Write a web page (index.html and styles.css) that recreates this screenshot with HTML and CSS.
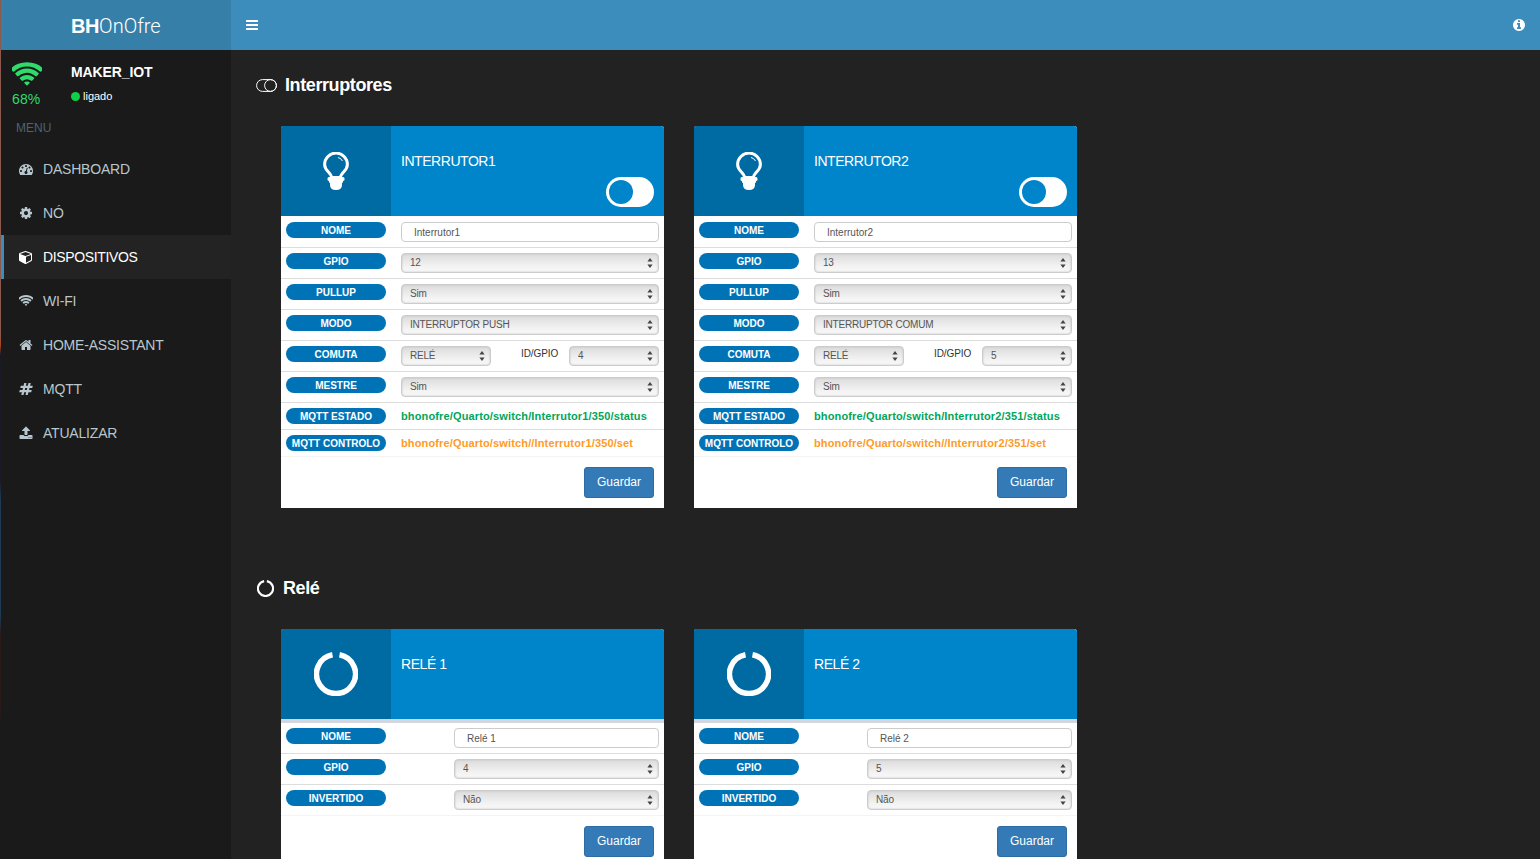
FILE: index.html
```html
<!DOCTYPE html>
<html>
<head>
    <title>BHOnOfre</title>
    <link rel="stylesheet" href="styles.css">
</head>
<body>
    <svg class="defs">
        <symbol id="i-bars" viewBox="0 0 1792 1792"><path d="M1664 1344v128q0 26-19 45t-45 19h-1408q-26 0-45-19t-19-45v-128q0-26 19-45t45-19h1408q26 0 45 19t19 45zm0-512v128q0 26-19 45t-45 19h-1408q-26 0-45-19t-19-45v-128q0-26 19-45t45-19h1408q26 0 45 19t19 45zm0-512v128q0 26-19 45t-45 19h-1408q-26 0-45-19t-19-45v-128q0-26 19-45t45-19h1408q26 0 45 19t19 45z"/></symbol>
        <symbol id="i-info" viewBox="0 0 1792 1792"><path d="M1152 1376v-160q0-14-9-23t-23-9h-96v-512q0-14-9-23t-23-9h-320q-14 0-23 9t-9 23v160q0 14 9 23t23 9h96v320h-96q-14 0-23 9t-9 23v160q0 14 9 23t23 9h448q14 0 23-9t9-23zm-128-896v-160q0-14-9-23t-23-9h-192q-14 0-23 9t-9 23v160q0 14 9 23t23 9h192q14 0 23-9t9-23zm640 416q0 209-103 385.5t-279.5 279.5-385.5 103-385.5-103-279.5-279.5-103-385.5 103-385.5 279.5-279.5 385.5-103 385.5 103 279.5 279.5 103 385.5z"/></symbol>
        <symbol id="i-wifi" viewBox="0 0 1792 1792"><path d="M896 1523q-20 0-93-73.5t-73-93.5q0-32 62.5-54t103.5-22 103.5 22 62.5 54q0 20-73 93.5t-93 73.5zm270-271q-2 0-40-25t-101.5-50-128.5-25-128.5 25-101 50-40.5 25q-18 0-93.5-75t-75.5-93q0-13 10-23 78-77 196-121t233-44 233 44 196 121q10 10 10 23 0 18-75.5 93t-93.5 75zm273-272q-11 0-23-8-136-105-252-154.5t-268-49.5q-85 0-170.5 22t-149 53-113.5 62-79 53-31 22q-17 0-92-75t-75-93q0-12 10-22 132-132 320-205t380-73 380 73 320 205q10 10 10 22 0 18-75 93t-92 75zm271-271q-11 0-22-9-179-157-371.5-236.5t-420.5-79.5-420.5 79.5-371.5 236.5q-11 9-22 9-17 0-92.5-75t-75.5-93q0-13 10-23 187-186 445-288t527-102 527 102 445 288q10 10 10 23 0 18-75.5 93t-92.5 75z"/></symbol>
        <symbol id="i-dashboard" viewBox="0 0 1792 1792"><path d="M384 1152q0-53-37.5-90.5t-90.5-37.5-90.5 37.5-37.5 90.5 37.5 90.5 90.5 37.5 90.5-37.5 37.5-90.5zm192-448q0-53-37.5-90.5t-90.5-37.5-90.5 37.5-37.5 90.5 37.5 90.5 90.5 37.5 90.5-37.5 37.5-90.5zm428 481l101-382q6-26-7.5-48.5t-38.5-29.5-48 6.5-30 39.5l-101 382q-60 5-107 43.5t-63 98.5q-20 77 20 146t117 89 146-20 89-117q16-60-6-117t-72-91zm660-33q0-53-37.5-90.5t-90.5-37.5-90.5 37.5-37.5 90.5 37.5 90.5 90.5 37.5 90.5-37.5 37.5-90.5zm-640-640q0-53-37.5-90.5t-90.5-37.5-90.5 37.5-37.5 90.5 37.5 90.5 90.5 37.5 90.5-37.5 37.5-90.5zm448 192q0-53-37.5-90.5t-90.5-37.5-90.5 37.5-37.5 90.5 37.5 90.5 90.5 37.5 90.5-37.5 37.5-90.5zm320 448q0 261-141 483-19 29-54 29h-1402q-35 0-54-29-141-221-141-483 0-182 71-348t191-286 286-191 348-71 348 71 286 191 191 286 71 348z"/></symbol>
        <symbol id="i-cog" viewBox="0 0 1792 1792"><path d="M1152 896q0-106-75-181t-181-75-181 75-75 181 75 181 181 75 181-75 75-181zm512-109v222q0 12-8 23t-20 13l-185 28q-19 54-39 91 35 50 107 138 10 12 10 25t-9 23q-27 37-99 108t-94 71q-12 0-26-9l-138-108q-44 23-91 38-16 136-29 186-7 28-36 28h-222q-14 0-24.5-8.5t-11.5-21.5l-28-184q-49-16-90-37l-141 107q-10 9-25 9-14 0-25-11-126-114-165-168-7-10-7-23 0-12 8-23 15-21 51-66.5t54-70.5q-27-50-41-99l-183-27q-13-2-21-12.5t-8-23.5v-222q0-12 8-23t19-13l186-28q14-46 39-92-40-57-107-138-10-12-10-24 0-10 9-23 26-36 98.5-107.5t94.5-71.5q13 0 26 10l138 107q44-23 91-38 16-136 29-186 7-28 36-28h222q14 0 24.5 8.5t11.5 21.5l28 184q49 16 90 37l142-107q9-9 24-9 13 0 25 10 129 119 165 170 7 8 7 22 0 12-8 23-15 21-51 66.5t-54 70.5q26 50 41 98l183 28q13 2 21 12.5t8 23.5z"/></symbol>
        <symbol id="i-cube" viewBox="0 0 1792 1792"><path d="M896 1629l640-349v-636l-640 233v752zm-64-865l698-254-698-254-698 254zm832-252v768q0 35-18 65t-49 47l-704 384q-28 16-61 16t-61-16l-704-384q-31-17-49-47t-18-65v-768q0-40 23-73t61-47l704-256q22-8 44-8t44 8l704 256q38 14 61 47t23 73z"/></symbol>
        <symbol id="i-home" viewBox="0 0 1792 1792"><path d="M1472 992v480q0 26-19 45t-45 19h-384v-384h-256v384h-384q-26 0-45-19t-19-45v-480q0-1 .5-3t.5-3l575-474 575 474q1 2 1 6zm223-69l-62 74q-8 9-21 11h-3q-13 0-21-7l-692-577-692 577q-12 8-24 7-13-2-21-11l-62-74q-8-10-7-23.5t11-21.5l719-599q32-26 76-26t76 26l244 204v-195q0-14 9-23t23-9h192q14 0 23 9t9 23v408l219 182q10 8 11 21.5t-7 23.5z"/></symbol>
        <symbol id="i-hash" viewBox="0 0 1792 1792"><path d="M991 1024l64-256h-254l-64 256h254zm768-504l-56 224q-7 24-31 24h-327l-64 256h311q15 0 25 12 10 14 6 28l-56 224q-5 24-31 24h-327l-81 328q-7 24-31 24h-224q-16 0-26-12-9-12-6-28l78-312h-254l-81 328q-7 24-31 24h-225q-15 0-25-12-9-12-6-28l78-312h-311q-15 0-25-12-9-12-6-28l56-224q7-24 31-24h327l64-256h-311q-15 0-25-12-10-14-6-28l56-224q5-24 31-24h327l81-328q7-24 32-24h224q15 0 25 12 9 12 6 28l-78 312h254l81-328q7-24 32-24h224q15 0 25 12 9 12 6 28l-78 312h311q15 0 25 12 9 12 6 28z"/></symbol>
        <symbol id="i-upload" viewBox="0 0 1792 1792"><path d="M1344 1472q0-26-19-45t-45-19-45 19-19 45 19 45 45 19 45-19 19-45zm256 0q0-26-19-45t-45-19-45 19-19 45 19 45 45 19 45-19 19-45zm128-224v320q0 40-28 68t-68 28h-1472q-40 0-68-28t-28-68v-320q0-40 28-68t68-28h427q21 56 70.5 92t110.5 36h256q61 0 110.5-36t70.5-92h427q40 0 68 28t28 68zm-325-648q-17 40-59 40h-256v448q0 26-19 45t-45 19h-256q-26 0-45-19t-19-45v-448h-256q-42 0-59-40-17-39 14-69l448-448q18-19 45-19t45 19l448 448q31 30 14 69z"/></symbol>
        <symbol id="i-bulb" viewBox="0 0 26 38">
            <path d="M8.5 25.5C8.5 20.5 1.6 19 1.6 12.5a11.4 11.4 0 0 1 22.8 0C24.4 19 17.5 20.5 17.5 25.5z" fill="none" stroke="#fff" stroke-width="3"/>
            <path d="M6 25h14q1.5 0 1.5 1.5v1q0 1.5-1.5 1.5v1q0 1-1 1v2q0 5-6 5t-6-5v-2q-1 0-1-1v-1q-1.5 0-1.5-1.5v-1q0-1.5 1.5-1.5z" fill="#fff"/>
            <path d="M15 5.5q3 .6 4.5 3.5" fill="none" stroke="#fff" stroke-width="1"/>
        </symbol>
        <symbol id="i-power" viewBox="0 0 44 44"><path d="M18.5 2.8A19.5 19.5 0 1 0 25.5 2.8" fill="none" stroke="currentColor" stroke-width="5.5"/></symbol>
    </svg>

    <div class="app">
        <aside class="sidebar">
            <div class="logo"><b>BH</b>OnOfre</div>
            <div class="user-panel">
                <div class="signal">
                    <svg class="signal-icon"><use href="#i-wifi"/></svg>
                    <span class="signal-value">68%</span>
                </div>
                <div class="user-info">
                    <div class="user-name">MAKER_IOT</div>
                    <div class="user-status"><span class="dot"></span>ligado</div>
                </div>
            </div>
            <div class="menu-header">MENU</div>
            <ul class="menu">
                <li><svg class="icon"><use href="#i-dashboard"/></svg>DASHBOARD</li>
                <li><svg class="icon"><use href="#i-cog"/></svg>NÓ</li>
                <li class="active"><svg class="icon"><use href="#i-cube"/></svg>DISPOSITIVOS</li>
                <li><svg class="icon"><use href="#i-wifi"/></svg>WI-FI</li>
                <li><svg class="icon"><use href="#i-home"/></svg>HOME-ASSISTANT</li>
                <li><svg class="icon"><use href="#i-hash"/></svg>MQTT</li>
                <li><svg class="icon"><use href="#i-upload"/></svg>ATUALIZAR</li>
            </ul>
        </aside>

        <div class="main">
            <header class="navbar">
                <svg class="icon"><use href="#i-bars"/></svg>
                <svg class="icon"><use href="#i-info"/></svg>
            </header>

            <main class="content">
                <h2 class="section-title">
                    <svg class="title-toggle" viewBox="0 0 21 13"><rect x="0.6" y="0.6" width="19.8" height="11.8" rx="5.9" fill="none" stroke="#fff"/><circle cx="14.5" cy="6.5" r="5.9" fill="none" stroke="#fff"/></svg>
                    Interruptores
                </h2>
                <div class="cards">
                    <section class="card">
                        <div class="card-head">
                            <div class="card-icon"><svg class="bulb"><use href="#i-bulb"/></svg></div>
                            <div class="card-body">
                                <div class="card-title">INTERRUTOR1</div>
                                <div class="toggle"><span class="knob"></span></div>
                            </div>
                        </div>
                        <div class="rows">
                            <div class="row"><span class="pill">NOME</span><input type="text" value="Interrutor1"></div>
                            <div class="row"><span class="pill">GPIO</span><select><option>12</option></select></div>
                            <div class="row"><span class="pill">PULLUP</span><select><option>Sim</option><option>Não</option></select></div>
                            <div class="row"><span class="pill">MODO</span><select><option>INTERRUPTOR PUSH</option></select></div>
                            <div class="row"><span class="pill">COMUTA</span>
                                <div class="split"><select><option>RELÉ</option></select><span class="split-label">ID/GPIO</span><select><option>4</option></select></div>
                            </div>
                            <div class="row"><span class="pill">MESTRE</span><select><option>Sim</option><option>Não</option></select></div>
                            <div class="row"><span class="pill">MQTT ESTADO</span><span class="topic state">bhonofre/Quarto/switch/Interrutor1/350/status</span></div>
                            <div class="row"><span class="pill">MQTT CONTROLO</span><span class="topic control">bhonofre/Quarto/switch//Interrutor1/350/set</span></div>
                        </div>
                        <div class="card-foot"><button class="button">Guardar</button></div>
                    </section>

                    <section class="card">
                        <div class="card-head">
                            <div class="card-icon"><svg class="bulb"><use href="#i-bulb"/></svg></div>
                            <div class="card-body">
                                <div class="card-title">INTERRUTOR2</div>
                                <div class="toggle"><span class="knob"></span></div>
                            </div>
                        </div>
                        <div class="rows">
                            <div class="row"><span class="pill">NOME</span><input type="text" value="Interrutor2"></div>
                            <div class="row"><span class="pill">GPIO</span><select><option>13</option></select></div>
                            <div class="row"><span class="pill">PULLUP</span><select><option>Sim</option><option>Não</option></select></div>
                            <div class="row"><span class="pill">MODO</span><select><option>INTERRUPTOR COMUM</option></select></div>
                            <div class="row"><span class="pill">COMUTA</span>
                                <div class="split"><select><option>RELÉ</option></select><span class="split-label">ID/GPIO</span><select><option>5</option></select></div>
                            </div>
                            <div class="row"><span class="pill">MESTRE</span><select><option>Sim</option><option>Não</option></select></div>
                            <div class="row"><span class="pill">MQTT ESTADO</span><span class="topic state">bhonofre/Quarto/switch/Interrutor2/351/status</span></div>
                            <div class="row"><span class="pill">MQTT CONTROLO</span><span class="topic control">bhonofre/Quarto/switch//Interrutor2/351/set</span></div>
                        </div>
                        <div class="card-foot"><button class="button">Guardar</button></div>
                    </section>
                </div>

                <h2 class="section-title relay-title">
                    <svg class="title-power"><use href="#i-power"/></svg>
                    Relé
                </h2>
                <div class="cards">
                    <section class="card">
                        <div class="card-head">
                            <div class="card-icon"><svg class="power"><use href="#i-power"/></svg></div>
                            <div class="card-body"><div class="card-title">RELÉ 1</div></div>
                        </div>
                        <div class="rows rows-relay">
                            <div class="row"><span class="pill">NOME</span><input type="text" value="Relé 1"></div>
                            <div class="row"><span class="pill">GPIO</span><select><option>4</option></select></div>
                            <div class="row"><span class="pill">INVERTIDO</span><select><option>Não</option><option>Sim</option></select></div>
                        </div>
                        <div class="card-foot"><button class="button">Guardar</button></div>
                    </section>

                    <section class="card">
                        <div class="card-head">
                            <div class="card-icon"><svg class="power"><use href="#i-power"/></svg></div>
                            <div class="card-body"><div class="card-title">RELÉ 2</div></div>
                        </div>
                        <div class="rows rows-relay">
                            <div class="row"><span class="pill">NOME</span><input type="text" value="Relé 2"></div>
                            <div class="row"><span class="pill">GPIO</span><select><option>5</option></select></div>
                            <div class="row"><span class="pill">INVERTIDO</span><select><option>Não</option><option>Sim</option></select></div>
                        </div>
                        <div class="card-foot"><button class="button">Guardar</button></div>
                    </section>
                </div>
            </main>
        </div>
    </div>
</body>
</html>
```

FILE: styles.css
```css
* {
    box-sizing: border-box;
}

body {
    margin: 0;
    font-family: "Liberation Sans", Arial, sans-serif;
    background-color: #222;
    color: #333;
}

.defs {
    display: none;
}

.app {
    display: flex;
    height: 100vh;
    overflow: hidden;
    border-left: 1px solid;
    border-image: linear-gradient(#8a5a4e 0, #8a5a4e 335px, #b0431f 345px, #1a1a26 355px, #1a1a26 480px, #1f3a55 500px, #1f3a55 615px, #2a1a1a 635px, #2a1a1a 710px, #1a1a1a 720px) 1;
}

.icon {
    width: 14px;
    height: 14px;
    fill: currentColor;
    flex: none;
}

/* Sidebar */

.sidebar {
    width: 230px;
    flex: none;
    background-color: #1a1a1a;
}

.logo {
    height: 50px;
    background-color: #367fa9;
    color: #fff;
    font-family: Roboto, "Liberation Sans", sans-serif;
    font-weight: 300;
    font-size: 20px;
    line-height: 52px;
    padding-left: 70px;
}

.logo b {
    font-family: "Liberation Sans", Arial, sans-serif;
    font-weight: 700;
    letter-spacing: -0.4px;
}

.user-panel {
    display: flex;
    height: 67px;
    padding: 12px 0 0 11px;
}

.signal {
    width: 59px;
    flex: none;
}

.signal-icon {
    display: block;
    width: 30px;
    height: 30px;
    margin-top: -2px;
    fill: #2fdc6b;
}

.signal-value {
    display: block;
    margin-top: 1px;
    font-size: 14px;
    letter-spacing: 0.1px;
    color: #2fdc6b;
}

.user-name {
    font-size: 14px;
    font-weight: 700;
    letter-spacing: -0.1px;
    color: #fff;
    line-height: 20px;
}

.user-status {
    display: flex;
    align-items: center;
    margin-top: 6px;
    font-size: 11px;
    line-height: 16px;
    color: #fff;
}

.dot {
    width: 9px;
    height: 9px;
    border-radius: 50%;
    background-color: #0ed145;
    margin-right: 3px;
}

.menu-header {
    height: 30px;
    padding-left: 15px;
    font-size: 12px;
    line-height: 22px;
    color: #4b646f;
}

.menu {
    list-style: none;
    margin: 0;
    padding: 0;
}

.menu li {
    display: flex;
    align-items: center;
    gap: 10px;
    height: 44px;
    padding-left: 15px;
    border-left: 3px solid transparent;
    font-size: 14px;
    letter-spacing: -0.2px;
    color: #b8c7ce;
}

.menu li.active {
    background-color: #232323;
    border-left-color: #3c8dbc;
    letter-spacing: -0.35px;
    color: #fff;
}

/* Top bar */

.main {
    flex: 1;
    min-width: 0;
}

.navbar {
    display: flex;
    align-items: center;
    justify-content: space-between;
    height: 50px;
    padding: 0 14px;
    background-color: #3c8dbc;
    color: #fff;
}

/* Content */

.content {
    padding: 25px 0 0 25px;
}

.section-title {
    display: flex;
    align-items: center;
    gap: 8px;
    margin: 0 0 31px;
    font-size: 18px;
    font-weight: 700;
    line-height: 20px;
    letter-spacing: -0.4px;
    color: #fff;
}

.relay-title {
    margin-top: 70px;
    gap: 9px;
    padding-left: 1px;
}

.title-toggle {
    width: 21px;
    height: 13px;
}

.title-power {
    width: 17px;
    height: 17px;
    color: #fff;
}

.cards {
    display: flex;
    gap: 30px;
    padding-left: 25px;
}

.card {
    width: 383px;
    background-color: #fff;
    border-radius: 3px 3px 0 0;
}

.card-head {
    display: flex;
    height: 90px;
    background-color: #0085ca;
    border-radius: 3px 3px 0 0;
    overflow: hidden;
}

.card-icon {
    display: flex;
    align-items: center;
    justify-content: center;
    width: 110px;
    background-color: #006ba3;
}

.bulb {
    width: 26px;
    height: 38px;
}

.power {
    width: 44px;
    height: 44px;
    color: #fff;
}

.card-body {
    flex: 1;
    display: flex;
    flex-direction: column;
    justify-content: space-between;
    padding: 25px 10px 9px;
}

.card-title {
    font-size: 14px;
    line-height: 20px;
    letter-spacing: -0.45px;
    color: #fff;
}

.toggle {
    display: flex;
    align-items: center;
    align-self: flex-end;
    width: 48px;
    height: 30px;
    padding-left: 3px;
    border-radius: 15px;
    background-color: #fff;
}

.knob {
    width: 24px;
    height: 24px;
    border-radius: 50%;
    background-color: #0085ca;
}

/* Form rows */

.rows {
    border-top: 1px solid #fff;
}

.rows-relay {
    border-top: 4px solid #d2d6de;
}

.row {
    display: grid;
    grid-template-columns: 100px 1fr;
    column-gap: 15px;
    align-items: start;
    padding: 5px;
    border-bottom: 1px solid #ddd;
}

.row:last-child {
    border-bottom-color: #f4f4f4;
}

.rows-relay .row {
    column-gap: 68px;
}

.pill {
    height: 16px;
    padding-top: 1px;
    border-radius: 8px;
    background-color: #0073b7;
    color: #fff;
    font-size: 10px;
    font-weight: 700;
    line-height: 16px;
    text-align: center;
    white-space: nowrap;
}

input,
select {
    width: 100%;
    height: 20px;
    margin: 0;
    border: 1px solid #ccc;
    border-radius: 4px;
    font-family: "Liberation Sans", Arial, sans-serif;
    font-size: 10px;
    color: #555;
}

input {
    padding: 1px 12px 0;
    background-color: #fff;
}

select {
    appearance: none;
    padding: 0 0 0 8px;
    line-height: 18px;
    letter-spacing: -0.2px;
    background-color: #eee;
    background-image: url("data:image/svg+xml,%3Csvg xmlns='http://www.w3.org/2000/svg' width='6' height='10'%3E%3Cpath d='M3 0l2.6 3.6H.4zM3 10L.4 6.4h5.2z' fill='%23444'/%3E%3C/svg%3E"), linear-gradient(#dcdcdc, #f3f3f3 70%, #f8f8f8);
    background-repeat: no-repeat;
    background-position: right 5px center, 0 0;
    box-shadow: inset 0 0 2px #bbb;
}

.split {
    display: grid;
    grid-template-columns: 90px 1fr 90px;
}

.split-label {
    padding-left: 30px;
    font-size: 10px;
    line-height: 16px;
    letter-spacing: -0.1px;
}

.topic {
    font-size: 11px;
    font-weight: 700;
    line-height: 16px;
    letter-spacing: 0.14px;
    white-space: nowrap;
}

.topic.state {
    color: #00a65a;
}

.topic.control {
    color: #ff9a27;
}

.card-foot {
    display: flex;
    justify-content: flex-end;
    padding: 10px;
}

.button {
    width: 70px;
    height: 31px;
    padding: 0 0 2px;
    border: 1px solid #2e6da4;
    border-radius: 3px;
    background-color: #337ab7;
    color: #fff;
    font-family: "Liberation Sans", Arial, sans-serif;
    font-size: 12px;
    cursor: pointer;
}
```
